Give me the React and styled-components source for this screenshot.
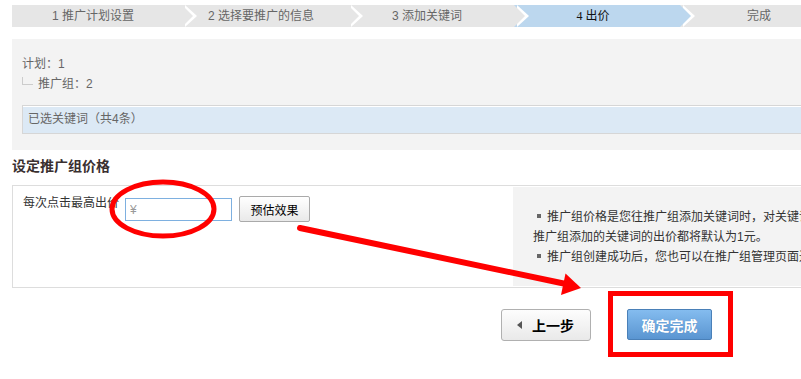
import React from "react";
import styled, { createGlobalStyle, css } from "styled-components";

const Global = createGlobalStyle`
  html { overflow: hidden; }
  html, body { margin: 0; padding: 0; background: #fff; }
  body {
    font-family: "Liberation Sans", "Noto Sans CJK SC", sans-serif;
    font-size: 12px;
    color: #333;
  }
`;

const Page = styled.div`
  position: relative;
  width: 1100px;
  min-height: 379px;
  padding-left: 12px;
  padding-top: 5px;
`;

const StepBar = styled.div`
  display: flex;
  height: 22px;
`;

const Step = styled.div`
  position: relative;
  flex: 0 0 ${(p) => p.$w}px;
  height: 22px;
  line-height: 22px;
  text-align: center;
  padding-right: 8px;
  box-sizing: border-box;
  background: ${(p) => (p.$active ? "#bcd7ee" : "#e6e6e6")};
  color: ${(p) => (p.$active ? "#111" : "#666")};
  ${(p) => p.$active && css`font-family: "Liberation Serif", "Noto Sans CJK SC", serif;`}
  ${(p) =>
    !p.$last &&
    css`
      &::before {
        content: "";
        position: absolute;
        top: 0;
        right: -15px;
        border-top: 11px solid transparent;
        border-bottom: 11px solid transparent;
        border-left: 12px solid #fff;
        z-index: 1;
      }
      &::after {
        content: "";
        position: absolute;
        top: 0;
        right: -11px;
        border-top: 11px solid transparent;
        border-bottom: 11px solid transparent;
        border-left: 11px solid ${p.$active ? "#bcd7ee" : "#e6e6e6"};
        z-index: 2;
      }
    `}
`;

const InfoPanel = styled.div`
  margin-top: 12px;
  background: #f3f3f3;
  padding: 15px 0 16px 10px;
  color: #666;
`;

const InfoLine = styled.div`
  display: flex;
  align-items: flex-start;
  line-height: 20px;
  height: 20px;
`;

const TreeLine = styled.span`
  width: 11px;
  height: 8px;
  margin-top: 3px;
  margin-right: 5px;
  border-left: 1px solid #ccc;
  border-bottom: 1px solid #ccc;
  box-sizing: border-box;
`;

const SelectedBar = styled.div`
  margin-top: 11px;
  height: 27px;
  line-height: 27px;
  border: 1px solid #d6d6d6;
  box-shadow: inset 0 1px 0 #fff;
  background: #dce9f5;
  padding-left: 5px;
  color: #666;
`;

const Heading = styled.div`
  margin-top: 6px;
  margin-bottom: 9px;
  font-size: 14px;
  font-weight: bold;
  line-height: 20px;
  color: #3a3030;
`;

const PriceBox = styled.div`
  display: flex;
  border: 1px solid #ddd;
  padding: 1px;
  height: 99px;
`;

const PriceLeft = styled.div`
  flex: 0 0 499px;
  box-sizing: border-box;
  padding: 9px 0 0 9px;
`;

const PriceRow = styled.div`
  display: flex;
  align-items: flex-start;
`;

const Label = styled.span`
  line-height: 14px;
  color: #333;
`;

const PriceInput = styled.input`
  margin: 2px 0 0 6px;
  width: 107px;
  height: 23px;
  box-sizing: border-box;
  border: 1px solid #7eb0e0;
  padding: 0 0 0 4px;
  font: inherit;
  font-size: 12px;
  outline: none;
  &::placeholder { color: #999; }
`;

const SmallButton = styled.button`
  margin-left: 7px;
  width: 71px;
  height: 26px;
  border: 1px solid #aaa;
  border-radius: 2px;
  background: linear-gradient(#ffffff, #e9e9e9);
  font: inherit;
  font-size: 12px;
  color: #000;
  padding: 0;
`;

const TipPanel = styled.div`
  flex: 0 0 450px;
  box-sizing: border-box;
  background: #f3f3f3;
  padding-left: 20px;
  display: flex;
  flex-direction: column;
  justify-content: center;
  line-height: 20px;
  color: #333;
  white-space: nowrap;
  overflow: hidden;
`;

const Bullet = styled.span`
  display: inline-block;
  width: 4px;
  height: 4px;
  background: #666;
  vertical-align: middle;
  margin: 0 6px 2px 4px;
`;

const ActionRow = styled.div`
  display: flex;
  gap: 36px;
  margin-top: 21px;
  padding-left: 489px;
`;

const PrevButton = styled.button`
  display: flex;
  align-items: center;
  width: 90px;
  height: 32px;
  box-sizing: border-box;
  border: 1px solid #b0b0b0;
  border-radius: 3px;
  background: linear-gradient(#fdfdfd, #e9e9e9);
  padding: 0 0 0 15px;
  font: inherit;
  font-size: 14px;
  font-weight: bold;
  color: #000;
`;

const LeftTriangle = styled.span`
  width: 0;
  height: 0;
  border-top: 4px solid transparent;
  border-bottom: 4px solid transparent;
  border-right: 5px solid #555;
  margin-right: 10px;
`;

const ConfirmButton = styled.button`
  width: 85px;
  height: 31px;
  box-sizing: border-box;
  border: 1px solid #4a80b8;
  border-radius: 2px;
  background: linear-gradient(#84bcef, #5a95d1);
  color: #fff;
  font: inherit;
  font-size: 14px;
  font-weight: bold;
  padding: 0;
  text-shadow: 0 0 1px rgba(40, 80, 130, 0.4);
`;

const Annotations = styled.svg`
  position: absolute;
  left: 0;
  top: 0;
  pointer-events: none;
`;

const steps = [
  { w: 170, t: "1 推广计划设置" },
  { w: 166, t: "2 选择要推广的信息" },
  { w: 166, t: "3 添加关键词" },
  { w: 166, t: "4 出价", active: true },
  { w: 166, t: "完成", last: true },
];

export default function App() {
  return (
    <Page>
      <Global />
      <StepBar>
        {steps.map((s, i) => (
          <Step key={i} $w={s.w} $active={s.active} $last={s.last} style={{ zIndex: steps.length - i }}>
            {s.t}
          </Step>
        ))}
      </StepBar>

      <InfoPanel>
        <InfoLine>计划：1</InfoLine>
        <InfoLine>
          <TreeLine />
          推广组：2
        </InfoLine>
        <SelectedBar>已选关键词（共4条）</SelectedBar>
      </InfoPanel>

      <Heading>设定推广组价格</Heading>

      <PriceBox>
        <PriceLeft>
          <PriceRow>
            <Label>每次点击最高出价</Label>
            <PriceInput placeholder="¥" />
            <SmallButton>预估效果</SmallButton>
          </PriceRow>
        </PriceLeft>
        <TipPanel>
          <div>
            <Bullet />
            推广组价格是您往推广组添加关键词时，对关键词设置的默认出价。以后往该
          </div>
          <div>推广组添加的关键词的出价都将默认为1元。</div>
          <div>
            <Bullet />
            推广组创建成功后，您也可以在推广组管理页面进行修改。
          </div>
        </TipPanel>
      </PriceBox>

      <ActionRow>
        <PrevButton>
          <LeftTriangle />
          上一步
        </PrevButton>
        <ConfirmButton>确定完成</ConfirmButton>
      </ActionRow>

      <Annotations width="801" height="379" viewBox="0 0 801 379">
        <ellipse cx="163" cy="209" rx="51" ry="27" fill="none" stroke="#ff0000" strokeWidth="5" />
        <line x1="300" y1="228" x2="566" y2="284" stroke="#ff0000" strokeWidth="6" strokeLinecap="round" />
        <polygon points="581,288 561,295 565.5,273.5" fill="#ff0000" />
        <rect x="610.5" y="293.5" width="120" height="61" fill="none" stroke="#ff0000" strokeWidth="5" />
      </Annotations>
    </Page>
  );
}
